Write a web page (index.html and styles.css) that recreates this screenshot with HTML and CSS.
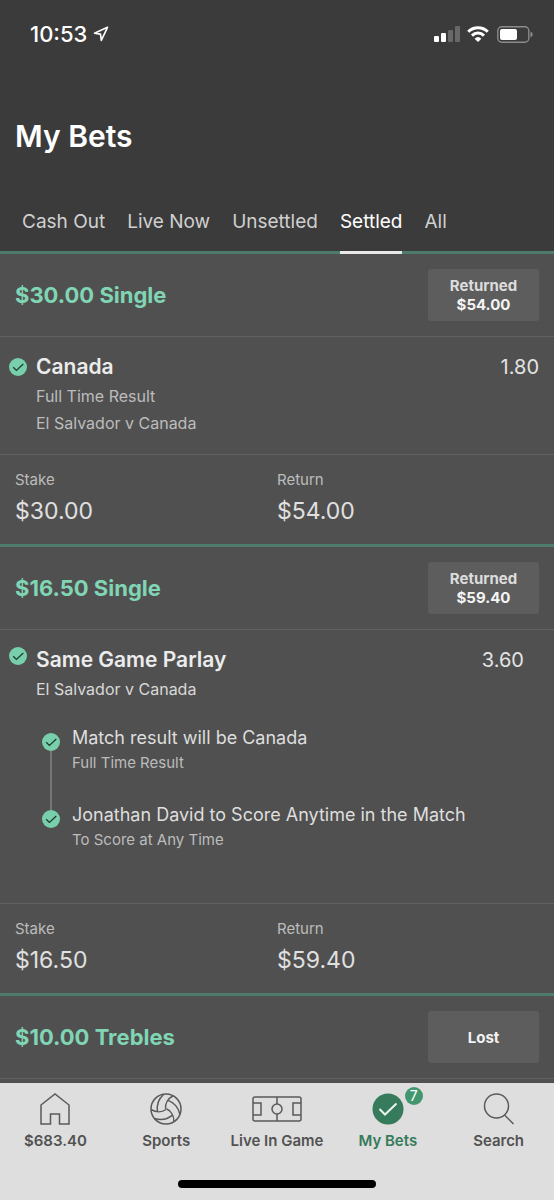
FILE: index.html
```
<!DOCTYPE html>
<html lang="en">
<head>
<meta charset="utf-8">
<meta name="viewport" content="width=device-width, initial-scale=1">
<title>My Bets</title>
<link rel="stylesheet" href="styles.css">
</head>
<body>
<svg class="defs" aria-hidden="true">
  <symbol id="tick" viewBox="0 0 18 18">
    <circle cx="9" cy="9" r="9" fill="#77d0ab"/>
    <path d="M4.200 9.200l3.200 3.200 6.900-6.400" fill="none" stroke="#20382e" stroke-width="1.300"/>
  </symbol>
  <symbol id="seam" viewBox="0 0 32 32">
    <path d="M16 16.500C12 19.500 6 19.500 1 16.500M7.500 18.500C6.500 12 8.500 6 13.500 1.500"/>
  </symbol>
</svg>
<header class="top">
  <div class="status">
    <span class="clock">10:53</span>
    <svg class="locate" width="16" height="16" viewBox="0 0 16 16" fill="none" stroke="#fff" stroke-width="1.600" stroke-linejoin="round"><path d="M14.500 1.300L1.500 7.200l6 .9.800 6.300z"/></svg>
    <svg class="signal" width="26" height="16" viewBox="0 0 26 16" fill="#fff"><rect x="0" y="10" width="5" height="6" rx="1"/><rect x="7" y="7" width="5" height="9" rx="1"/><rect x="14" y="4" width="5" height="12" rx="1" fill="#686868"/><rect x="21" y="0" width="5" height="16" rx="1" fill="#686868"/></svg>
    <svg class="wifi" width="22" height="16" viewBox="0 0 22 16" fill="none" stroke="#fff" stroke-width="3"><path d="M1.200 5.700a14 14 0 0 1 19.600 0"/><path d="M5 9.600a8.500 8.500 0 0 1 12 0"/><path d="M11 16l-3.400-3.300a5 5 0 0 1 6.800 0z" fill="#fff" stroke="none"/></svg>
    <svg class="battery" width="36" height="17" viewBox="0 0 36 17"><rect x=".8" y=".8" width="31" height="15.400" rx="4" fill="none" stroke="#8b8b8b" stroke-width="1.400"/><rect x="3" y="3" width="17" height="11" rx="2" fill="#fff"/><path d="M33.500 5.500q2.200 1 2.200 3t-2.200 3z" fill="#8b8b8b"/></svg>
  </div>
  <h1>My Bets</h1>
  <nav class="tabs" aria-label="Bet filters">
    <a href="#cash-out">Cash Out</a>
    <a href="#live-now">Live Now</a>
    <a href="#unsettled">Unsettled</a>
    <a href="#settled" class="active" aria-current="page">Settled</a>
    <a href="#all">All</a>
  </nav>
</header>
<main>
  <article class="bet">
    <div class="bet-head"><h2>$30.00 Single</h2><div class="result"><span>Returned</span><strong>$54.00</strong></div></div>
    <div class="selection">
      <svg class="tick"><use href="#tick"/></svg>
      <div class="detail">
        <h3>Canada</h3>
        <p>Full Time Result</p>
        <p>El Salvador v Canada</p>
      </div>
      <span class="odds">1.80</span>
    </div>
    <dl class="totals">
      <div><dt>Stake</dt><dd>$30.00</dd></div>
      <div><dt>Return</dt><dd>$54.00</dd></div>
    </dl>
  </article>
  <article class="bet">
    <div class="bet-head"><h2>$16.50 Single</h2><div class="result"><span>Returned</span><strong>$59.40</strong></div></div>
    <div class="selection parlay">
      <svg class="tick"><use href="#tick"/></svg>
      <div class="detail">
        <h3>Same Game Parlay</h3>
        <p class="event">El Salvador v Canada</p>
      </div>
      <span class="odds">3.60</span>
    </div>
    <ul class="legs">
      <li><div class="marker"><svg class="tick"><use href="#tick"/></svg></div><div><h4>Match result will be Canada</h4><p>Full Time Result</p></div></li>
      <li><div class="marker"><svg class="tick"><use href="#tick"/></svg></div><div><h4>Jonathan David to Score Anytime in the Match</h4><p>To Score at Any Time</p></div></li>
    </ul>
    <dl class="totals">
      <div><dt>Stake</dt><dd>$16.50</dd></div>
      <div><dt>Return</dt><dd>$59.40</dd></div>
    </dl>
  </article>
  <article class="bet">
    <div class="bet-head"><h2>$10.00 Trebles</h2><div class="result"><strong>Lost</strong></div></div>
  </article>
</main>
<footer class="bar">
  <nav class="bar-items" aria-label="Main">
    <a href="#home">
      <svg width="32" height="32" viewBox="0 0 32 32"><path d="M2 12L16 1l14 11v19H20.500V21h-9v10H2z"/></svg>
      <span>$683.40</span>
    </a>
    <a href="#sports">
      <svg width="32" height="32" viewBox="0 0 32 32"><circle cx="16" cy="16" r="15"/><use href="#seam" width="32" height="32"/><use href="#seam" width="32" height="32" transform="rotate(120 16 16)"/><use href="#seam" width="32" height="32" transform="rotate(240 16 16)"/></svg>
      <span>Sports</span>
    </a>
    <a href="#live">
      <svg width="50" height="32" viewBox="0 0 50 32"><rect x="1" y="4" width="48" height="24" rx="2"/><path d="M25 4v7M25 21v7M1 10h8v12H1M49 10h-8v12h8"/><circle cx="25" cy="16" r="5"/></svg>
      <span>Live In Game</span>
    </a>
    <a href="#my-bets" class="current" aria-current="page">
      <svg width="32" height="32" viewBox="0 0 32 32"><circle cx="16" cy="16" r="15.500" fill="#367b5c" stroke="none"/><path d="M7.500 16l5.500 5.500L24.500 10.500" stroke="#e8f5ee" stroke-width="2"/></svg>
      <b class="count">7</b>
      <span>My Bets</span>
    </a>
    <a href="#search">
      <svg width="32" height="32" viewBox="0 0 32 32"><circle cx="13.500" cy="13" r="12"/><path d="M21.500 22l9 9"/></svg>
      <span>Search</span>
    </a>
  </nav>
  <div class="home-line"></div>
</footer>
</body>
</html>
```
FILE: styles.css
```
* { box-sizing: border-box; }
body, h1, h2, h3, h4, p, ul, dl, dd { margin: 0; }
body {
  min-height: 100vh;
  display: flex;
  flex-direction: column;
  background: #505050;
  color: #e4e4e4;
  font-family: Inter, "Liberation Sans", sans-serif;
}
a { color: inherit; text-decoration: none; }
svg { flex: none; }
.defs { position: absolute; width: 0; height: 0; }

.top { background: #3b3b3b; border-bottom: 3px solid #4d7c6b; }
.status { display: flex; align-items: center; padding: 20px 21px 0 30px; height: 48px; }
.clock { font-size: 22px; line-height: 28px; font-weight: 500; color: #fff; }
.locate { margin-left: 6px; }
.signal { margin-left: auto; }
.wifi { margin-left: 7px; }
.battery { margin-left: 8px; }
h1 { padding: 68px 15px 0; font-size: 30px; line-height: 40px; font-weight: 600; color: #fff; }
.tabs { display: flex; gap: 22px; padding: 52px 22px 0; margin-bottom: -3px; }
.tabs a { height: 46px; font-size: 19px; line-height: 28px; color: #d0d0d0; white-space: nowrap; border-bottom: 3px solid transparent; }
.tabs .active { color: #fff; border-color: #e8e8e8; }

main { flex: 1; }
.bet { border-bottom: 3px solid #4d7c6b; }
.bet-head { display: flex; align-items: center; justify-content: space-between; height: 83px; padding: 0 15px; border-bottom: 1px solid #616161; }
.bet:last-child { border-bottom: 0; }
h2 { font-size: 22px; line-height: 28px; font-weight: 700; color: #80d5b4; }
.result { display: flex; flex-direction: column; align-items: center; justify-content: center; width: 111px; height: 52px; border-radius: 3px; background: #5d5d5d; font-size: 15px; line-height: 19px; font-weight: 700; }
.result span { color: #dcdcdc; }
.result strong { font-weight: 700; color: #f4f4f4; }

.tick { width: 18px; height: 18px; flex: none; }
.selection { display: flex; padding: 16px 15px 17px 9px; }
.selection .tick { margin: 5px 9px 0 0; }
.detail { flex: 1; }
h3 { font-size: 21px; line-height: 28px; font-weight: 600; color: #ececec; }
.detail p { font-size: 16px; line-height: 27px; color: #bcbcbc; }
.detail h3 + p { margin-top: 2px; }
.odds { font-size: 20px; line-height: 28px; }
.parlay { padding: 16px 30px 0 9px; }
.parlay .tick { margin-top: 1px; }
.detail .event { color: #d8d8d8; }

.legs { list-style: none; padding: 21px 15px 25px 42px; }
.legs li { display: flex; gap: 12px; min-height: 77px; }
.marker { display: flex; flex-direction: column; align-items: center; padding-top: 9px; margin-bottom: -9px; }
.legs li:not(:last-child) .marker::after { content: ""; flex: 1; width: 2px; background: #777; }
h4 { font-size: 18px; line-height: 28px; font-weight: 400; color: #dedede; }
.legs p { font-size: 15px; line-height: 22px; color: #bcbcbc; }

.totals { display: flex; height: 90px; padding: 13px 15px 0; border-top: 1px solid #616161; }
.totals div { width: 50%; }
.totals dt { font-size: 15px; line-height: 24px; color: #bcbcbc; }
.totals dd { font-size: 23px; line-height: 38px; color: #e0e0e0; }

.bar { position: sticky; bottom: 0; height: 117px; background: #dedede; color: #525252; display: flex; flex-direction: column; justify-content: space-between; align-items: center; padding-bottom: 12px; }
.bar-items { display: grid; grid-template-columns: repeat(5, 1fr); width: 100%; padding-top: 10px; }
.bar-items a { position: relative; display: flex; flex-direction: column; align-items: center; gap: 6px; font-size: 15px; line-height: 20px; font-weight: 600; white-space: nowrap; }
.bar-items svg { fill: none; stroke: #5a5a5a; stroke-width: 1.5px; }
.bar-items .current { color: #367b5c; }
.count { position: absolute; top: -6px; left: calc(50% + 17px); width: 18px; height: 18px; border-radius: 50%; background: #43976f; color: #fff; font-size: 14px; line-height: 18px; font-weight: 400; text-align: center; }
.home-line { width: 198px; height: 8px; border-radius: 4px; background: #000; }
```
